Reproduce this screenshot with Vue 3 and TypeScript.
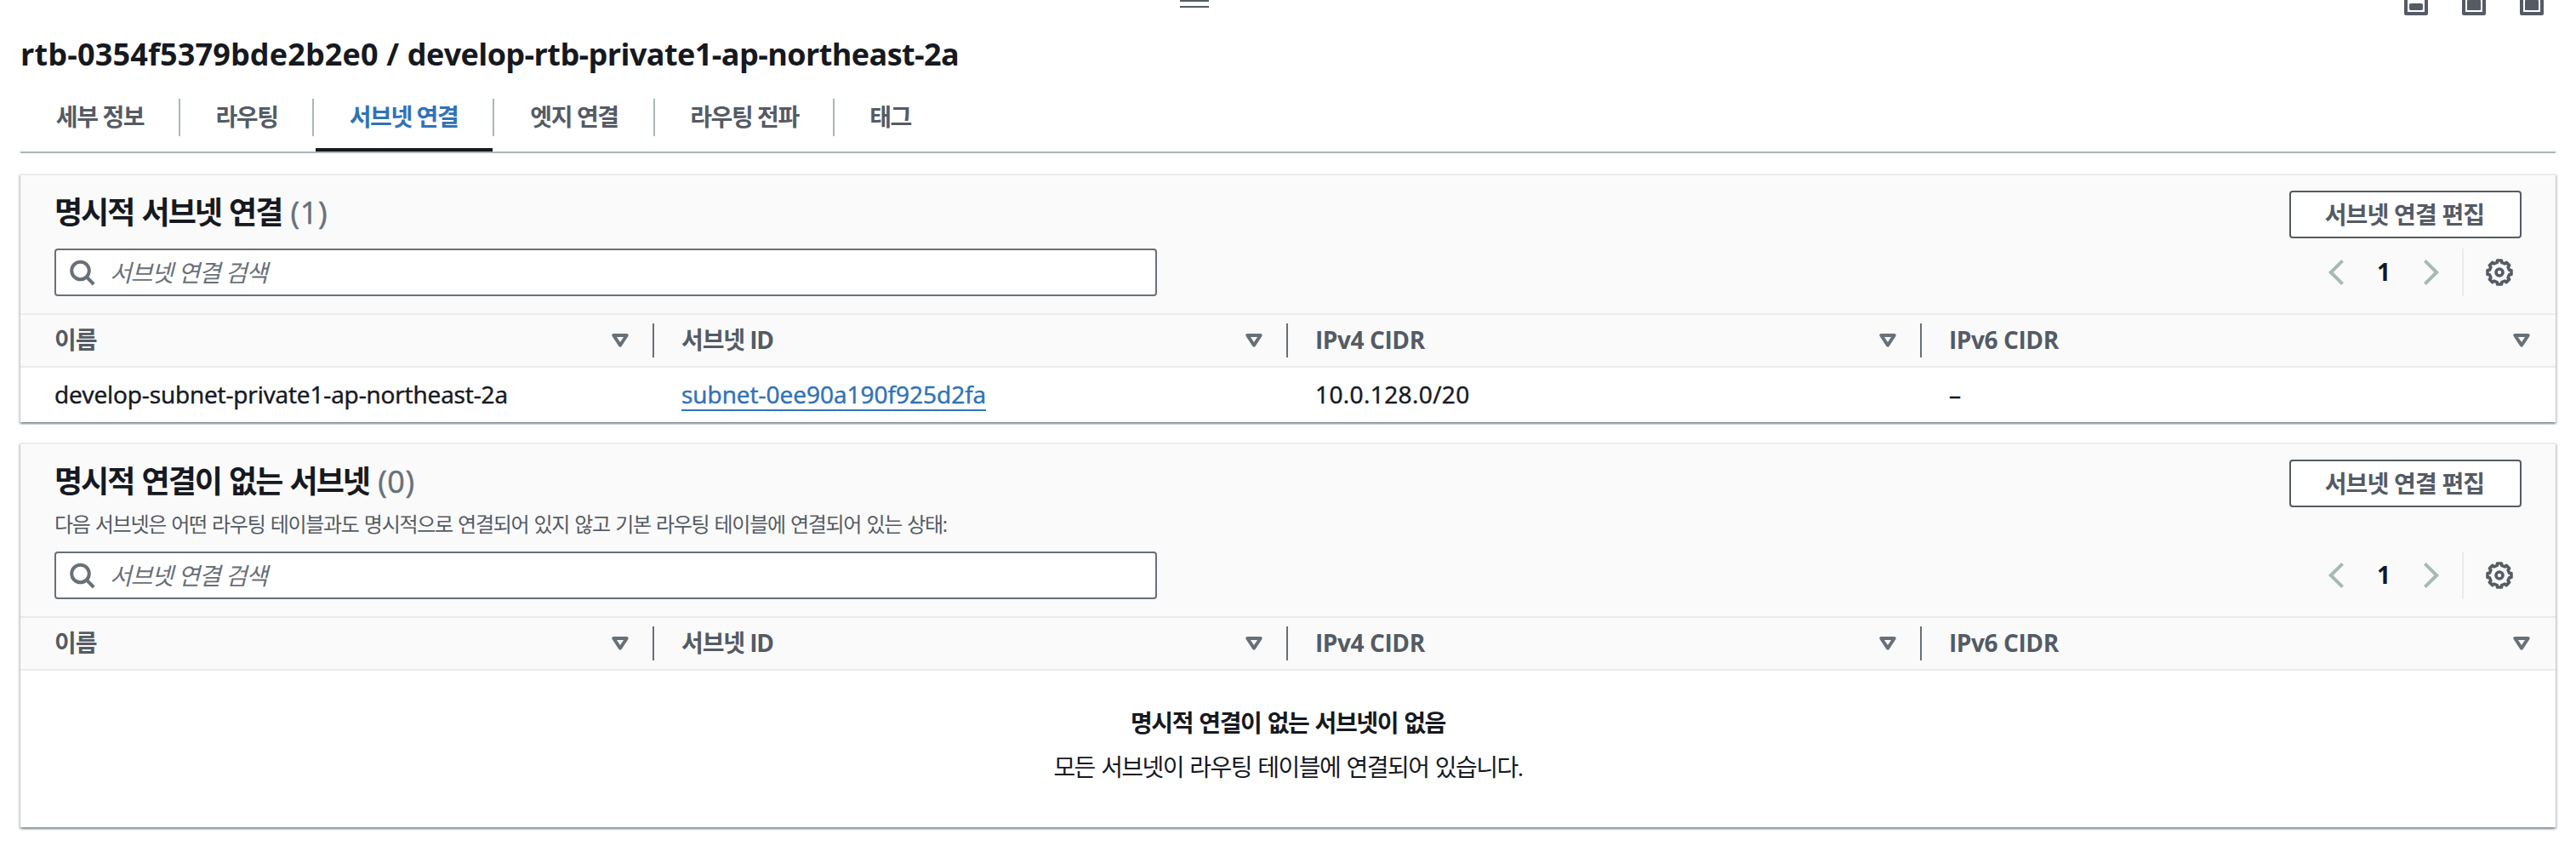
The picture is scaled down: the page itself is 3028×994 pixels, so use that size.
<script setup lang="ts">
interface Tab { label: string; width: number; active?: boolean }
interface Row { name: string; subnetId: string; ipv4: string; ipv6: string }
interface Panel { title: string; count: number; description?: string; rows: Row[] }

const tabs: Tab[] = [
  { label: '세부 정보', width: 188 },
  { label: '라우팅', width: 157 },
  { label: '서브넷 연결', width: 212, active: true },
  { label: '엣지 연결', width: 189 },
  { label: '라우팅 전파', width: 211 },
  { label: '태그', width: 132 },
]

const columns = ['이름', '서브넷 ID', 'IPv4 CIDR', 'IPv6 CIDR']

const panels: Panel[] = [
  {
    title: '명시적 서브넷 연결',
    count: 1,
    rows: [
      {
        name: 'develop-subnet-private1-ap-northeast-2a',
        subnetId: 'subnet-0ee90a190f925d2fa',
        ipv4: '10.0.128.0/20',
        ipv6: '–',
      },
    ],
  },
  {
    title: '명시적 연결이 없는 서브넷',
    count: 0,
    description:
      '다음 서브넷은 어떤 라우팅 테이블과도 명시적으로 연결되어 있지 않고 기본 라우팅 테이블에 연결되어 있는 상태:',
    rows: [],
  },
]

// Outline of an eight-toothed gear centred in a 32 x 32 box.
function gearPath(): string {
  const points: string[] = []
  for (let i = 0; i < 8; i++) {
    const steps: [number, number][] = [[-13, 11.9], [-10, 14.2], [10, 14.2], [13, 11.9]]
    for (const [offset, radius] of steps) {
      const angle = ((i * 45 + offset) * Math.PI) / 180
      points.push(`${(16 + radius * Math.sin(angle)).toFixed(2)} ${(16 - radius * Math.cos(angle)).toFixed(2)}`)
    }
  }
  return `M${points.join('L')}Z`
}
const gear = gearPath()
</script>

<template>
  <main class="split-panel">
    <div class="toolbar">
      <div class="handle"></div>
      <div class="positions">
        <svg width="28" height="18" viewBox="0 0 28 18">
          <path d="M0 0h4v14h20V0h4v16a2 2 0 0 1-2 2H2a2 2 0 0 1-2-2z" />
          <rect x="6" y="4" width="16" height="8" rx="2" />
        </svg>
        <svg v-for="n in 2" :key="n" width="28" height="18" viewBox="0 0 28 18">
          <path d="M0 0h4v14h20V0h4v16a2 2 0 0 1-2 2H2a2 2 0 0 1-2-2z" />
          <path d="M6 1a1 1 0 0 1 1-1h14a1 1 0 0 1 1 1v10a1 1 0 0 1-1 1H7a1 1 0 0 1-1-1z" />
        </svg>
      </div>
    </div>

    <h1><span class="table-id">rtb-0354f5379bde2b2e0 / </span>develop-rtb-private1-ap-northeast-2a</h1>

    <nav class="tabs">
      <a
        v-for="tab in tabs"
        :key="tab.label"
        class="tab"
        :class="{ active: tab.active }"
        :style="{ width: tab.width + 'px' }"
      ><span>{{ tab.label }}</span></a>
    </nav>

    <section v-for="panel in panels" :key="panel.title" class="panel">
      <header class="panel-head">
        <div class="title-row">
          <h2>{{ panel.title }} <span class="count">({{ panel.count }})</span></h2>
          <button class="edit">서브넷 연결 편집</button>
        </div>
        <p v-if="panel.description" class="description">{{ panel.description }}</p>
        <div class="tools-row">
          <div class="search">
            <svg width="32" height="32" viewBox="0 0 32 32">
              <circle cx="14.5" cy="14" r="10.3" />
              <path d="M22 21.6l8.2 8.4" />
            </svg>
            <span>서브넷 연결 검색</span>
          </div>
          <div class="pager">
            <svg class="chevron" width="32" height="32" viewBox="0 0 32 32"><path d="M23.6 2.4L9.8 16l13.8 13.6" /></svg>
            <span class="page">1</span>
            <svg class="chevron" width="32" height="32" viewBox="0 0 32 32"><path d="M8.4 2.4L22.2 16 8.4 29.6" /></svg>
            <span class="pager-divider"></span>
            <svg class="gear" width="32" height="32" viewBox="0 0 32 32">
              <path :d="gear" />
              <circle cx="16" cy="16" r="4" />
            </svg>
          </div>
        </div>
      </header>

      <div class="grid columns">
        <div v-for="column in columns" :key="column" class="cell">
          <span>{{ column }}</span>
          <svg width="20" height="16" viewBox="0 0 20 16"><path d="M2.3 2h15.4L10 13.7z" /></svg>
        </div>
      </div>

      <div v-for="row in panel.rows" :key="row.subnetId" class="grid row">
        <div class="cell name">{{ row.name }}</div>
        <div class="cell"><a class="link">{{ row.subnetId }}</a></div>
        <div class="cell ip">{{ row.ipv4 }}</div>
        <div class="cell">{{ row.ipv6 }}</div>
      </div>

      <div v-if="!panel.rows.length" class="empty">
        <strong>명시적 연결이 없는 서브넷이 없음</strong>
        <p>모든 서브넷이 라우팅 테이블에 연결되어 있습니다.</p>
      </div>
    </section>
  </main>
</template>

<style>
body {
  margin: 0;
  background: #fff;
}
</style>

<style scoped>
.split-panel {
  box-sizing: border-box;
  height: 994px;
  padding: 0 24px;
  overflow: hidden;
  font-family: "Open Sans", "Noto Sans CJK KR", sans-serif;
  font-size: 28px;
  line-height: 40px;
  color: #16191f;
  white-space: nowrap;
}
.toolbar {
  display: flex;
  justify-content: space-between;
  height: 18px;
  padding: 0 14px 0 1363px;
}
.handle {
  width: 34px;
  height: 5px;
  border: solid #545b64;
  border-width: 2px 0;
}
.positions {
  display: flex;
  gap: 40px;
  fill: #545b64;
}
h1 {
  margin: 21px 0 0;
  font-size: 36px;
  line-height: 50px;
  letter-spacing: -0.58px;
}
.table-id {
  letter-spacing: 0.15px;
}
.tabs {
  display: flex;
  height: 89px;
  border-bottom: 2px solid #aab7b8;
}
.tab {
  box-sizing: border-box;
  position: relative;
  padding-top: 28px;
  font-weight: 700;
  text-align: center;
  color: #545b64;
  letter-spacing: -1.4px;
}
.tab:not(:last-child)::after {
  content: "";
  position: absolute;
  top: 27px;
  right: 0;
  width: 2px;
  height: 44px;
  background: #aab7b8;
}
.tab span {
  margin-right: 1px;
}
.active {
  color: #3072b8;
}
.active::before {
  content: "";
  position: absolute;
  bottom: 0;
  left: 2px;
  right: 2px;
  height: 4px;
  background: #16191f;
}
.panel {
  margin-top: 24px;
  border-top: 2px solid #ebebeb;
  background: #fff;
  box-shadow: 0 2px 2px rgba(0, 28, 36, 0.3), 2px 2px 2px rgba(0, 28, 36, 0.15), -2px 2px 2px rgba(0, 28, 36, 0.15);
}
.panel-head {
  padding: 18px 40px 20px;
  background: #fafafa;
  border-bottom: 2px solid #ebebeb;
}
.title-row {
  display: flex;
  justify-content: space-between;
  align-items: flex-start;
}
h2 {
  margin: 0;
  font-size: 36px;
  line-height: 52px;
  letter-spacing: -2px;
  word-spacing: 1.85px;
}
.count {
  margin-left: 1px;
  font-weight: 400;
  color: #687078;
  letter-spacing: 0.6px;
  -webkit-text-stroke: 0.5px currentColor;
}
.edit {
  box-sizing: border-box;
  width: 273px;
  height: 56px;
  padding: 0 2px 0 0;
  border: 2px solid #545b64;
  border-radius: 4px;
  background: #fff;
  font: 700 28px/52px "Open Sans", "Noto Sans CJK KR", sans-serif;
  letter-spacing: -0.8px;
  color: #545b64;
}
.description {
  margin: 4px 0 16px;
  font-size: 24px;
  line-height: 32px;
  letter-spacing: -1.28px;
  word-spacing: 1.26px;
  color: #545b64;
}
.tools-row {
  display: flex;
  justify-content: space-between;
}
.title-row + .tools-row {
  margin-top: 12px;
}
.search {
  box-sizing: border-box;
  display: flex;
  align-items: center;
  width: 1296px;
  height: 56px;
  padding-left: 14px;
  border: 2px solid #687078;
  border-radius: 4px;
  background: #fff;
  color: #687078;
}
.search svg {
  margin-right: 17px;
  fill: none;
  stroke: #687078;
  stroke-width: 4;
}
.search span {
  font-style: italic;
  letter-spacing: -1.1px;
}
.pager {
  display: flex;
  align-items: center;
  padding-right: 10px;
}
.chevron {
  fill: none;
  stroke: #aab7b8;
  stroke-width: 4;
}
.page {
  width: 80px;
  padding-bottom: 2px;
  text-align: center;
  font-weight: 700;
}
.pager-divider {
  width: 2px;
  height: 56px;
  margin: 0 26px 0 20px;
  background: #ebebeb;
}
.gear {
  fill: none;
  stroke: #545b64;
  stroke-width: 3.6;
  stroke-linejoin: round;
}
.grid {
  display: grid;
  grid-template-columns: repeat(4, 1fr);
}
.cell {
  display: flex;
  align-items: center;
  padding-left: 32px;
}
.cell:first-child {
  padding-left: 40px;
}
.columns {
  height: 60px;
  background: #fafafa;
  border-bottom: 2px solid #ebebeb;
  font-weight: 700;
  color: #545b64;
  letter-spacing: -0.4px;
}
.columns .cell {
  height: 40px;
  margin-top: 10px;
  justify-content: space-between;
  padding-right: 28px;
  border-right: 2px solid #687078;
}
.columns .cell:nth-child(-n + 2) {
  letter-spacing: -1.1px;
}
.columns .cell:last-child {
  border-color: transparent;
}
.columns span {
  padding-bottom: 2px;
}
.columns svg {
  fill: none;
  stroke: #687078;
  stroke-width: 4;
  stroke-linejoin: round;
}
.row {
  height: 62px;
  padding-bottom: 2px;
  -webkit-text-stroke: 0.5px currentColor;
}
.name {
  letter-spacing: -0.12px;
}
.ip {
  letter-spacing: 0.4px;
}
.link {
  height: 36px;
  margin-top: 2px;
  line-height: 36px;
  color: #3072b8;
  border-bottom: 2px solid #3072b8;
}
.empty {
  height: 184px;
  box-sizing: border-box;
  padding-top: 41px;
  text-align: center;
}
.empty strong {
  display: block;
  letter-spacing: -1.4px;
  word-spacing: 1.36px;
}
.empty p {
  margin: 12px 0 0;
  letter-spacing: -1.52px;
  word-spacing: 1.52px;
}
</style>
